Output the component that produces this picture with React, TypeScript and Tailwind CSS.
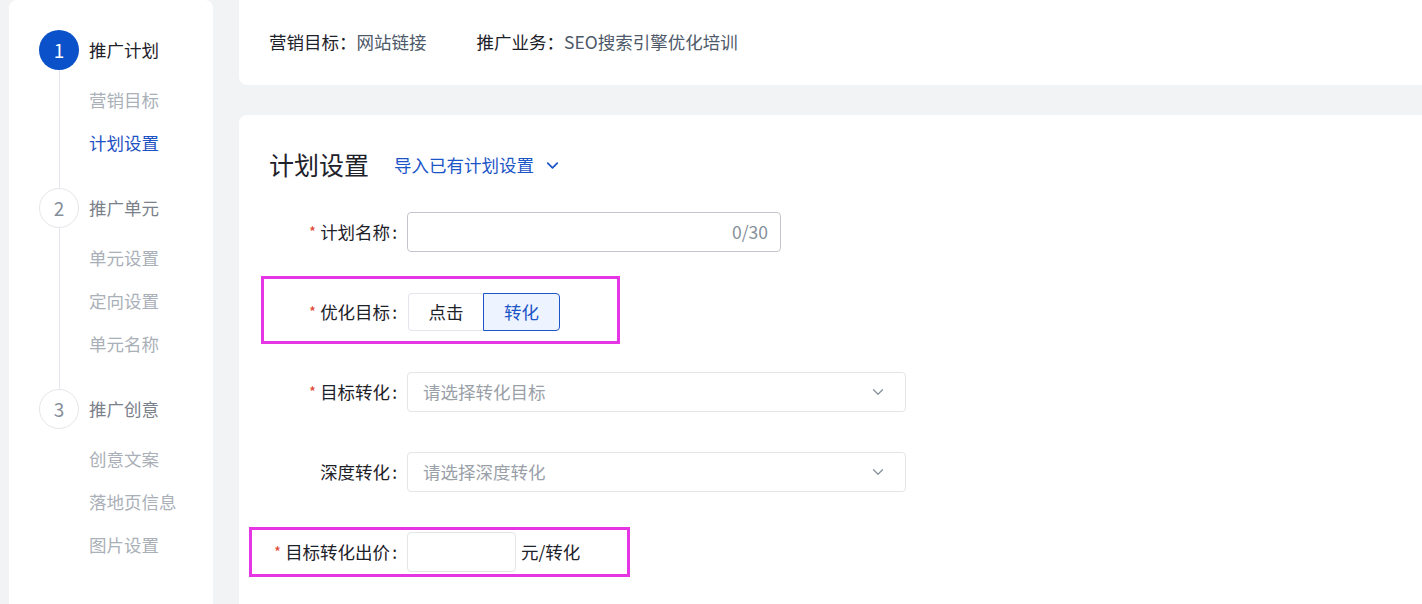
import { ChevronDown } from "lucide-react";

const steps = [
  { n: 1, title: "推广计划", active: true, subs: ["营销目标", "计划设置"], current: "计划设置" },
  { n: 2, title: "推广单元", active: false, subs: ["单元设置", "定向设置", "单元名称"] },
  { n: 3, title: "推广创意", active: false, subs: ["创意文案", "落地页信息", "图片设置"] },
];

function Label({ text, required }: { text: string; required?: boolean }) {
  return (
    <div className="flex w-[128px] shrink-0 items-center justify-end text-[17.5px] text-[#1d2129]">
      {required ? <span className="mr-[4px] text-[15px] text-[#e0452f]">*</span> : null}
      <span>{text}</span>
      <span className="ml-[2px]">:</span>
    </div>
  );
}

function Sidebar() {
  return (
    <aside className="ml-[9px] w-[204px] shrink-0 rounded-t-lg bg-white pl-[30px] pt-[30px]">
      {steps.map((s, i) => (
        <div key={s.n}>
          <div className="flex h-[40px] items-center">
            <div
              className={
                s.active
                  ? "flex h-[40px] w-[40px] items-center justify-center rounded-full bg-[#0b51c9] text-[19px] text-white"
                  : "flex h-[40px] w-[40px] items-center justify-center rounded-full border border-[#e5e6eb] bg-white text-[19px] text-[#86909c]"
              }
            >
              {s.n}
            </div>
            <span
              className={
                s.active
                  ? "ml-[10px] text-[17.5px] text-[#1d2129]"
                  : "ml-[10px] text-[17.5px] text-[#7b818b]"
              }
            >
              {s.title}
            </span>
          </div>
          <div className="flex">
            <div className="flex w-[40px] justify-center">
              {i < steps.length - 1 ? <div className="w-px bg-[#e5e6eb]" /> : null}
            </div>
            <div className="ml-[10px] pb-[23px] pt-[9px]">
              {s.subs.map((t) => (
                <div
                  key={t}
                  className={
                    t === s.current
                      ? "flex h-[43px] items-center text-[17.5px] text-[#1c52c4]"
                      : "flex h-[43px] items-center text-[17.5px] text-[#aab0b8]"
                  }
                >
                  {t}
                </div>
              ))}
            </div>
          </div>
        </div>
      ))}
    </aside>
  );
}

function SelectBox({ placeholder }: { placeholder: string }) {
  return (
    <div className="ml-[10px] flex h-[40px] w-[499px] items-center justify-between rounded-[4px] border border-[#e3e5e9] pl-[15px] pr-[18px]">
      <span className="text-[17.5px] text-[#9aa0a8]">{placeholder}</span>
      <ChevronDown className="h-[18px] w-[18px] text-[#86909c]" strokeWidth={1.6} />
    </div>
  );
}

export default function App() {
  return (
    <div
      className="flex h-[604px] w-[1422px] overflow-hidden bg-[#f2f3f5]"
      style={{ fontFamily: '"Noto Sans CJK SC", "Noto Sans", sans-serif' }}
    >
      <Sidebar />

      {/* cards run past the right edge of the viewport */}
      <main className="-mr-[40px] ml-[26px] flex flex-1 flex-col">
        <section className="flex h-[85px] shrink-0 items-center rounded-b-lg bg-white pl-[30px] text-[17.5px]">
          <span className="text-[#1d2129]">营销目标：</span>
          <span className="text-[#4e5969]">网站链接</span>
          <span className="ml-[50px] text-[#1d2129]">推广业务：</span>
          <span className="text-[#4e5969]">SEO搜索引擎优化培训</span>
        </section>

        <section className="mt-[30px] flex-1 rounded-t-lg bg-white pl-[30px] pt-[30px]">
          <div className="flex h-[40px] items-center">
            <h2 className="text-[25px] text-[#1d2129]">计划设置</h2>
            <span className="ml-[25px] text-[17.5px] text-[#1c55c8]">导入已有计划设置</span>
            <ChevronDown className="ml-[9px] h-[19px] w-[19px] text-[#1c55c8]" strokeWidth={2.2} />
          </div>

          <div className="mt-[27px] flex flex-col gap-[40px]">
            <div className="flex h-[40px] items-center">
              <Label text="计划名称" required />
              <div className="ml-[10px] flex h-[40px] w-[374px] items-center justify-end rounded-[4px] border border-[#c2c6cc] pr-[12px]">
                <span className="text-[17.5px] text-[#86909c]">0/30</span>
              </div>
            </div>

            <div className="relative flex h-[40px] items-center">
              <Label text="优化目标" required />
              <div className="ml-[11px] flex h-[38px]">
                <div className="flex w-[75px] items-center justify-center rounded-l-[4px] border border-r-0 border-[#e5e6eb] text-[17.5px] text-[#1d2129]">
                  点击
                </div>
                <div className="flex w-[77px] items-center justify-center rounded-r-[4px] border border-[#1c55c8] bg-[#edf4ff] text-[17.5px] text-[#1c55c8]">
                  转化
                </div>
              </div>
              <div className="absolute -left-[8px] -top-[16px] h-[68px] w-[359px] border-[3px] border-[#e535e5]" />
            </div>

            <div className="flex h-[40px] items-center">
              <Label text="目标转化" required />
              <SelectBox placeholder="请选择转化目标" />
            </div>

            <div className="flex h-[40px] items-center">
              <Label text="深度转化" />
              <SelectBox placeholder="请选择深度转化" />
            </div>

            <div className="relative flex h-[40px] items-center">
              <Label text="目标转化出价" required />
              <div className="ml-[10px] h-[40px] w-[109px] rounded-[4px] border border-[#e3e5e9]" />
              <span className="ml-[5px] text-[17.5px] text-[#1d2129]">元/转化</span>
              <div className="absolute -left-[20px] -top-[5px] h-[50px] w-[381px] border-[3px] border-[#e535e5]" />
            </div>
          </div>
        </section>
      </main>
    </div>
  );
}
